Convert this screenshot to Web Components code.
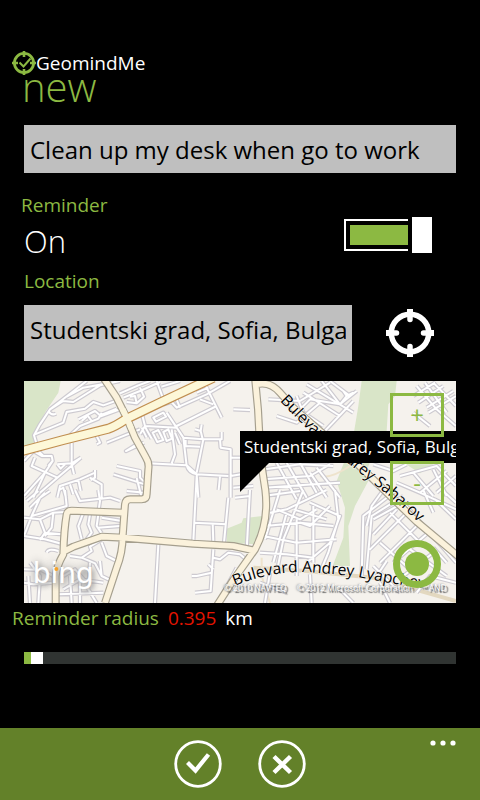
<!DOCTYPE html>
<html lang="en">
<head>
<meta charset="utf-8">
<meta name="viewport" content="width=device-width, initial-scale=1">
<title>GeomindMe</title>
<style>
  html, body { margin: 0; min-height: 100vh; background: #000; }
  body {
    display: flex; flex-direction: column;
    font-family: "Open Sans", "Noto Sans", sans-serif; color: #fff;
    --accent: #8cb942; --bar: #638129; --field: #bfbfbf;
  }
  geo-app { flex: 1; }
</style>
</head>
<body>
<geo-app></geo-app>
<script>
function define(name, html) {
  const template = document.createElement('template');
  template.innerHTML = html;
  customElements.define(name, class extends HTMLElement {
    constructor() {
      super();
      this.attachShadow({ mode: 'open' }).append(template.content.cloneNode(true));
    }
  });
}

define('geo-header', `
<style>
  :host { display: block; padding: 51px 12px 0; }
  .brand { display: flex; align-items: center; height: 24px; font-size: 19px; line-height: 24px; }
  svg { width: 24px; height: 24px; flex: none; }
  h1 { margin: 0; padding-left: 10px; font-size: 40px; line-height: 24px; font-weight: 300; color: var(--accent); }
</style>
<div class="brand">
  <svg viewBox="0 0 24 24" fill="none" stroke="#8cb942" aria-hidden="true">
    <circle cx="12" cy="12" r="9.6" stroke-width="2.8"/>
    <path d="M12 0v6M12 18v6M0 12h6M18 12h6" stroke-width="2.6"/>
    <path d="M7.5 11.5l4 4 7-8" stroke-width="2"/>
  </svg>
  <span><slot name="brand"></slot></span>
</div>
<h1><slot></slot></h1>`);

define('geo-toggle', `
<style>
  :host { display: block; padding-right: 24px; }
  .title { display: block; margin-left: -3px; font-size: 19px; line-height: 24px; color: var(--accent); }
  .row { display: flex; justify-content: space-between; height: 48px; }
  .state { font-size: 31px; line-height: 48px; font-weight: 300; }
  input {
    appearance: none; margin: 0; width: 88px; height: 36px; flex: none;
    display: flex; align-items: center; justify-content: space-between;
  }
  input::before {
    content: ""; box-sizing: border-box; width: 64px; height: 32px;
    border: 2px solid #fff; border-right: 0; padding: 4px 0 4px 4px;
    background: var(--accent) content-box;
  }
  input::after { content: ""; width: 20px; height: 36px; background: #fff; }
</style>
<label class="title" for="t"><slot name="title"></slot></label>
<div class="row">
  <span class="state"><slot></slot></span>
  <input id="t" type="checkbox" role="switch" checked>
</div>`);

define('geo-map', `
<style>
  :host { display: block; position: relative; height: 222px; overflow: hidden; background: #f5f2ed; }
  .tiles { display: block; width: 100%; height: 100%; }
  .callout { position: absolute; left: 50%; right: 0; top: 50px; height: 32px; box-sizing: border-box;
    background: #000; padding-left: 4px; font-size: 17px; line-height: 32px; white-space: nowrap; }
  .callout::after { content: ""; position: absolute; left: 0; top: 32px; width: 29px; height: 29px;
    background: #000; clip-path: polygon(0 0, 100% 0, 0 100%); }
  button { position: absolute; right: 12px; box-sizing: border-box; width: 54px; height: 44px; padding: 0;
    border: 3px solid var(--accent); background: none; color: var(--accent);
    font-family: inherit; font-size: 24px; line-height: 38px; }
  .in { top: 12px; }
  .out { top: 80px; }
  .me { top: 159px; right: 15px; width: 48px; height: 48px; border: 0; }
  .me svg { display: block; }
</style>
<svg class="tiles" viewBox="12 15 1296 666" preserveAspectRatio="xMinYMin slice" aria-label="Map of Sofia">
  <defs>
    <path id="minor" d="
      M200 15L90 100L60 145L42 178L50 205M140 62L190 35L300 15M90 100L130 75L160 78L240 28L300 15M85 105Q95 120 108 113
      M45 175L130 140L140 108L195 98L220 78L250 88L300 70M175 130L225 105L240 118L290 98M185 135L200 122M200 115L215 135M150 178L180 150L235 128L245 110M240 122L300 100
      M300 52L355 28L390 15M310 65L360 45L420 18M320 78L350 82L345 60L330 62M360 35L372 62L350 82M410 15L430 70M425 32L480 15M465 60L480 95M430 85L455 78L470 95L560 55L630 15
      M550 15L605 125M530 50L565 35M590 90L470 150M580 85L540 70M365 110L375 150L360 175M400 125L430 110L438 122L408 137ZM440 110L490 185L500 270M375 150L470 155
      M365 155L380 185M375 152L395 188M398 170L415 162L430 192L412 198ZM430 168L445 160L456 188L440 195ZM465 170L480 205M360 160L260 200M350 205L318 225L372 200
      M455 160L465 235L455 262M490 185L550 190L605 190L605 168M550 190L530 290M525 160L542 165L545 145M542 165L548 190M495 210L540 212M497 192L497 210M600 190L602 215L632 220L632 365
      M385 262L500 268L530 295L625 300M500 268Q505 290 530 295M530 295L535 365M600 300L596 342M632 245L690 245M632 300L690 290
      M230 180L240 200L230 205M155 200L155 265L162 295M112 265L155 262L183 245M112 265L122 278L135 265M12 255L40 225L65 240L95 240L98 255L75 290M45 245L35 270L112 305L183 245M75 290L30 340L12 360M98 255L85 270M55 225L70 240M75 290L40 365M112 305L60 350
      M112 365L120 330L180 310L225 290M118 342L130 335L138 365M150 325L160 355M175 312L182 345M210 305L245 325L245 365M225 282L225 305L212 312
      M290 270L360 285L360 305L375 320M280 295L375 325M350 305L365 365M320 345L375 350M640 335L700 330M640 100L690 102
      M12 480L35 420L60 365L90 345M20 375L55 345M30 395L75 350M12 425L60 430L100 410L135 408M35 420L140 390L135 342M60 430L75 470L60 492M100 410L95 455L75 480M12 480L75 490L130 505M75 470L125 475M80 530Q85 515 115 525
      M165 342L180 375L270 365L300 375M235 342L240 375L235 408M190 410L175 450L185 490M210 415L205 445L215 470L200 490M235 415L230 450L245 472M245 425L305 435M235 455L300 450
      M150 540L185 545L215 525L210 512L245 490M185 545L225 562L245 600L270 612M245 500L260 540L290 555M240 555L245 600M210 560L205 640L230 681M12 580L65 582L100 600M30 560L60 600L55 681M12 620L40 625L100 620M25 600L30 681M130 600L165 580L200 620M130 640L180 610L250 620M150 600L155 681M180 600L180 681M115 655L250 650
      M415 505L405 681M530 300L520 495M520 440L620 445M625 365L612 500M578 440L580 500M580 520L572 645L525 650M575 590L530 600L515 600M580 545L600 550L625 530L660 535L690 560M565 565L580 580M610 650L650 575M690 342L680 520M645 365L690 360
      M745 70L840 75L930 20M770 120L830 140L900 80M830 60L850 110L910 150M850 50L960 120M830 110L870 70L960 85L1010 45M905 15L960 85M860 25L1000 110M960 85L980 60L970 45M980 60L1000 50M930 15L990 60M910 170L1000 75
      M735 280L840 265L940 270M730 310L870 300L930 265M735 335L880 325L960 320M770 260L830 370M800 260L860 365M840 260L890 350M730 360L840 345M890 275L960 365M870 290L920 365
      M780 342L735 490M850 342L790 490M920 342L800 400L750 410M870 380L960 420L930 500L860 560M730 480L830 500L950 490M735 450L840 440L940 450M770 400L840 430L890 400M830 430L830 600M790 490L770 590M880 390L880 560M945 342L955 430L925 530L900 590M720 530L800 535L880 545M800 410L760 560M820 400L920 430M930 390L870 450L840 440
      M1190 30L1250 100L1308 150M1215 20L1280 110M1180 60L1245 20M1195 80L1270 30M1220 95L1300 45M1240 20L1308 90M1225 110L1308 60M1180 110L1230 150
      M1060 265L1120 285L1160 265M1140 300L1250 270L1308 330M1200 350L1280 285M1130 320L1200 350L1308 400M1180 290L1240 360M1250 350L1308 300M1240 280L1280 360
      M1130 342L1030 420L1025 600M1150 360L1055 420L1040 580M1090 342L1055 390L1040 450M1060 430L1150 380L1308 560M1110 410L1210 510M1060 475L1130 400M1050 520L1160 410M1080 560L1200 440M1060 570L1140 650M1120 560L1225 470M1080 500L1170 580M1240 515L1280 560M1170 520L1280 600M1150 600L1240 530M1070 600L1100 555M1210 342L1240 410M1245 370L1308 430M1275 350L1308 380
      M1190 650L1230 600L1308 620M870 595L875 681M750 590L735 681M960 640L1000 681M1080 620L1110 681M720 620L800 650"/>
    <path id="second" d="
      M250 5L290 65L320 125L345 185L378 245Q388 260 385 280L380 355Q380 370 365 370L330 370Q317 370 315 385L308 480Q308 530 290 575L255 681
      M107 681V600Q110 570 130 535Q132 460 140 415Q142 404 155 404L308 410
      M130 527L160 512L245 482L310 485L520 503L640 510L705 524
      M705 5L714 100L722 250L736 342Q748 440 705 520L640 612L590 690
      M710 25Q750 15 780 50L820 95L1010 262L1190 437L1320 545"/>
    <path id="highway" d="M0 227L130 192L265 158Q285 152 320 128L420 80L580 5"/>
    <path id="saharov" d="M779 75L870 168L1000 275L1110 362L1330 560"/>
    <path id="lyapchev" d="M644 630Q760 581 880 590L1000 600Q1130 628 1300 648"/>
  </defs>
  <g fill="#d9e5c8">
    <path d="M12 15H122L115 50L78 105L45 170L42 200L12 213Z"/>
    <path d="M1025 15H1130L1125 60L1105 85L1100 165L1060 230L1040 285L1045 315L1005 390L985 450L990 570H938L970 485L975 395L950 315L970 265L1000 180L1015 90Z"/>
    <path d="M620 458L665 440L670 427L727 420L735 450L710 505L620 500Z"/>
    <path d="M1158 265H1240L1200 292Z"/>
  </g>
  <g fill="none" stroke-linejoin="round">
    <path d="M700 575L860 585L1060 605L1308 675" stroke="#e3d8c0" stroke-width="12"/>
    <path d="M725 545V600L750 681M990 270Q930 310 900 300" stroke="#eee3cc" stroke-width="6"/>
    <use href="#minor" stroke="#cdcad0" stroke-width="13"/>
    <use href="#minor" stroke="#fff" stroke-width="6"/>
    <use href="#second" stroke="#a59f8e" stroke-width="24"/>
    <use href="#second" stroke="#fbf2dc" stroke-width="17"/>
    <use href="#highway" stroke="#c08e50" stroke-width="30"/>
    <use href="#highway" stroke="#fdf8d8" stroke-width="23"/>
    <path d="M308 100L320 125L334 158" stroke="#fbf5dc" stroke-width="17"/>
  </g>
  <g font-size="47" fill="#000" stroke="#f5f2ed" stroke-width="4" paint-order="stroke">
    <text><textPath href="#saharov">Bulevard Andrey Saharov</textPath></text>
    <text><textPath href="#lyapchev">Bulevard Andrey Lyapchev</textPath></text>
  </g>
  <g font-family="DejaVu Sans" font-size="84">
    <text x="38" y="621" fill="#fff" style="text-shadow:0 0 9px #8c8c8c,2px 3px 5px #aaa">bing</text>
    <circle cx="109" cy="579" r="6" fill="#f2a22c"/>
  </g>
  <g font-size="25" fill="#fff" style="text-shadow:2px 2px 1px #555,-1px 0 2px #777">
    <text x="612" y="646">© 2010 NAVTEQ</text>
    <text x="830" y="646">© 2012 Microsoft Corporation</text>
    <text x="1201" y="646">™ AND</text>
  </g>
</svg>
<div class="callout"><slot></slot></div>
<button class="in" aria-label="Zoom in">+</button>
<button class="out" aria-label="Zoom out">-</button>
<button class="me" aria-label="Centre on my place">
  <svg width="48" height="48" viewBox="0 0 48 48"><circle cx="24" cy="24" r="20.500" fill="none" stroke="#8cb942" stroke-width="7"/><circle cx="24" cy="24" r="12" fill="#8cb942"/></svg>
</button>`);

define('geo-form', `
<style>
  :host { display: block; padding: 26px 24px 0; }
  label, .radius { font-size: 19px; line-height: 24px; color: var(--accent); }
  input[type=text] {
    display: block; box-sizing: border-box; width: 100%; height: 48px; margin: 0; padding: 0 6px;
    border: 0; border-radius: 0; background: var(--field); color: #000;
    font-family: inherit; font-size: 24px;
  }
  geo-toggle { margin-top: 20px; }
  .place { display: block; margin: 4px 0 12px; }
  .row { display: flex; align-items: center; justify-content: space-between; padding-right: 22px; margin-bottom: 20px; }
  .row input[type=text] { flex: 1; height: 56px; padding-bottom: 8px; margin-right: 34px; }
  .locate { width: 48px; height: 48px; padding: 0; border: 0; background: none; flex: none; }
  .locate svg { display: block; }
  .radius { display: flex; gap: 9px; margin: 3px 0 22px -12px; }
  .radius output { color: #e51400; }
  .radius span { color: #fff; }
  input[type=range] {
    appearance: none; display: block; width: 100%; height: 12px; margin: 0; border-radius: 0;
    background: linear-gradient(var(--accent), var(--accent)) 0 0 / 8px 100% no-repeat #303432;
  }
  input[type=range]::-webkit-slider-thumb { appearance: none; width: 12px; height: 12px; border-radius: 0; background: #fff; }
</style>
<input type="text" value="Clean up my desk when go to work" aria-label="Task">
<geo-toggle><span slot="title">Reminder</span>On</geo-toggle>
<label class="place" for="place">Location</label>
<div class="row">
  <input id="place" type="text" value="Studentski grad, Sofia, Bulgaria">
  <button class="locate" aria-label="Locate">
    <svg width="48" height="48" viewBox="0 0 48 48" fill="none" stroke="#fff">
      <circle cx="24" cy="24" r="18.700" stroke-width="5.500"/>
      <path d="M24 0v4M24 44v4M0 24h4M44 24h4" stroke-width="6"/>
      <path d="M24 4v6.500M24 37.500V44M4 24h6.500M37.500 24H44" stroke-width="5.500" stroke-linecap="round"/>
    </svg>
  </button>
</div>
<geo-map>Studentski grad, Sofia, Bulg</geo-map>
<div class="radius"><label for="radius">Reminder radius</label><output for="radius">0.395</output><span>km</span></div>
<input id="radius" type="range" min="0" max="24" step="0.001" value="0.395">`);

define('geo-appbar', `
<style>
  :host { display: grid; grid-template-columns: 1fr auto 1fr; height: 72px; background: var(--bar); }
  nav { grid-column: 2; display: flex; gap: 36px; align-items: center; }
  button { padding: 0; border: 0; background: none; width: 48px; height: 48px; }
  svg { display: block; }
  .more { justify-self: end; width: 26px; height: 6px; margin: 12px 24px 0 0; }
</style>
<nav>
  <button aria-label="Save"><svg width="48" height="48" viewBox="0 0 48 48" fill="none" stroke="#fff">
    <circle cx="24" cy="24" r="22.300" stroke-width="2.800"/><path d="M13.500 22.500L21.500 30.500L34.500 14.500" stroke-width="4.200"/></svg></button>
  <button aria-label="Cancel"><svg width="48" height="48" viewBox="0 0 48 48" fill="none" stroke="#fff">
    <circle cx="24" cy="24" r="22.300" stroke-width="2.800"/><path d="M16 16.500L32.500 32.500M32.500 16.500L16 32.500" stroke-width="4.400"/></svg></button>
</nav>
<button class="more" aria-label="More"><svg width="26" height="6" viewBox="0 0 26 6" fill="#fff"><circle cx="3" cy="3" r="2.600"/><circle cx="13" cy="3" r="2.600"/><circle cx="23" cy="3" r="2.600"/></svg></button>`);

define('geo-app', `
<style>
  :host { display: flex; flex-direction: column; }
  geo-appbar { margin-top: auto; }
</style>
<geo-header><span slot="brand">GeomindMe</span>new</geo-header>
<geo-form></geo-form>
<geo-appbar></geo-appbar>`);
</script>
</body>
</html>
